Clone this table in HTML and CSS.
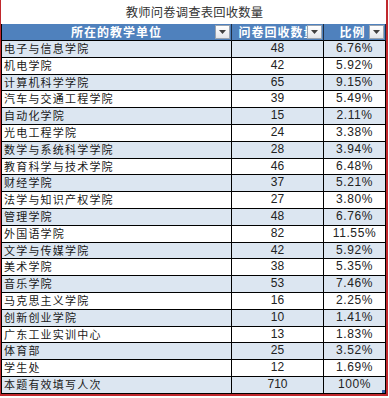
FILE: index.html
```html
<!DOCTYPE html>
<html lang="zh-CN">
<head>
<meta charset="utf-8">
<title>教师问卷调查表回收数量</title>
<link rel="stylesheet" href="styles.css">
</head>
<body>
<div class="frame">
  <div class="title">教师问卷调查表回收数量</div>
  <div class="sheet">
    <div class="hd c1">所在的教学单位<span class="dd"><svg width="7" height="4" viewBox="0 0 7 4"><path d="M0 0H7L3.5 4Z" fill="#404040"/></svg></span></div>
    <div class="hd c2">问卷回收数量<span class="dd"><svg width="7" height="4" viewBox="0 0 7 4"><path d="M0 0H7L3.5 4Z" fill="#404040"/></svg></span></div>
    <div class="hd c3">比例<span class="dd"><svg width="7" height="4" viewBox="0 0 7 4"><path d="M0 0H7L3.5 4Z" fill="#404040"/></svg></span></div>

    <div class="cell name band">电子与信息学院</div><div class="cell num band">48</div><div class="cell pct band">6.76%</div>
    <div class="cell name">机电学院</div><div class="cell num">42</div><div class="cell pct">5.92%</div>
    <div class="cell name band">计算机科学学院</div><div class="cell num band">65</div><div class="cell pct band">9.15%</div>
    <div class="cell name">汽车与交通工程学院</div><div class="cell num">39</div><div class="cell pct">5.49%</div>
    <div class="cell name band">自动化学院</div><div class="cell num band">15</div><div class="cell pct band">2.11%</div>
    <div class="cell name">光电工程学院</div><div class="cell num">24</div><div class="cell pct">3.38%</div>
    <div class="cell name band">数学与系统科学学院</div><div class="cell num band">28</div><div class="cell pct band">3.94%</div>
    <div class="cell name">教育科学与技术学院</div><div class="cell num">46</div><div class="cell pct">6.48%</div>
    <div class="cell name band">财经学院</div><div class="cell num band">37</div><div class="cell pct band">5.21%</div>
    <div class="cell name">法学与知识产权学院</div><div class="cell num">27</div><div class="cell pct">3.80%</div>
    <div class="cell name band">管理学院</div><div class="cell num band">48</div><div class="cell pct band">6.76%</div>
    <div class="cell name">外国语学院</div><div class="cell num">82</div><div class="cell pct">11.55%</div>
    <div class="cell name band">文学与传媒学院</div><div class="cell num band">42</div><div class="cell pct band">5.92%</div>
    <div class="cell name">美术学院</div><div class="cell num">38</div><div class="cell pct">5.35%</div>
    <div class="cell name band">音乐学院</div><div class="cell num band">53</div><div class="cell pct band">7.46%</div>
    <div class="cell name">马克思主义学院</div><div class="cell num">16</div><div class="cell pct">2.25%</div>
    <div class="cell name band">创新创业学院</div><div class="cell num band">10</div><div class="cell pct band">1.41%</div>
    <div class="cell name">广东工业实训中心</div><div class="cell num">13</div><div class="cell pct">1.83%</div>
    <div class="cell name band">体育部</div><div class="cell num band">25</div><div class="cell pct band">3.52%</div>
    <div class="cell name">学生处</div><div class="cell num">12</div><div class="cell pct">1.69%</div>
    <div class="cell name band">本题有效填写人次</div><div class="cell num band">710</div><div class="cell pct band last">100%<span class="grip"></span></div>
  </div>
</div>
</body>
</html>
```
FILE: styles.css
```css
* { box-sizing: border-box; }
html, body { margin: 0; padding: 0; background: #fff; }
body { width: 389px; height: 398px; overflow: hidden; }

.frame {
  width: 388px;
  border-left: 1px solid #c0282d;
  border-right: 2px solid #c0282d;
  border-bottom: 2px solid #c0282d;
}

.title {
  height: 24px;
  line-height: 24px;
  text-align: center;
  font-family: "Noto Sans CJK SC", sans-serif;
  font-size: 12.3px;
  color: #333;
  letter-spacing: 0.2px;
  padding-left: 2px;
}

.sheet {
  display: grid;
  grid-template-columns: 230px 92px 62px;
  grid-template-rows: 17px repeat(21, 16.8px);
  border-left: 1px solid #000;
}

.hd {
  position: relative;
  background: #4f81bd;
  color: #fff;
  font-family: "Noto Sans CJK SC", sans-serif;
  font-weight: 700;
  font-size: 12px;
  letter-spacing: 1px;
  line-height: 16px;
  text-align: center;
  border-right: 1px solid #1f2f45;
  border-bottom: 1px solid #000;
  overflow: hidden;
  white-space: nowrap;
}
.hd.c3 { padding-right: 4px; }

.dd {
  position: absolute;
  right: 1px;
  top: 1px;
  width: 15px;
  height: 14px;
  border: 1px solid #9aa4b0;
  background: linear-gradient(#ffffff, #e4e6ea);
  display: flex;
  align-items: center;
  justify-content: center;
}

.cell {
  position: relative;
  background: #fff;
  border-right: 1px solid #000;
  border-bottom: 1px solid #000;
  line-height: 15px;
  white-space: nowrap;
  overflow: hidden;
  color: #1a1a1a;
}
.cell.band { background: #dce6f1; }

.name {
  font-family: "Noto Sans CJK SC", sans-serif;
  font-size: 11px;
  letter-spacing: 1.2px;
  padding-left: 2px;
  font-weight: 400;
}
.num, .pct {
  font-family: "Liberation Sans", Arial, sans-serif;
  font-size: 12px;
  text-align: center;
  color: #222;
}
.pct { letter-spacing: 0.6px; }

.grip {
  position: absolute;
  right: 0;
  bottom: 0;
  width: 3px;
  height: 3px;
  background: #3a5fa8;
}
```
